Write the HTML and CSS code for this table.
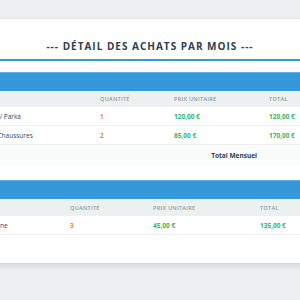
FILE: index.html
```html
<!DOCTYPE html>
<html lang="fr">
<head>
<meta charset="utf-8">
<title>Détail des achats par mois</title>
<link rel="stylesheet" href="styles.css">
</head>
<body>
<div class="card">
  <h2 class="title">--- DÉTAIL DES ACHATS PAR MOIS ---</h2>

  <section class="month">
    <div class="month-bar">Janvier 2024</div>
    <table class="items items-a">
      <colgroup>
        <col class="c-prod-a"><col class="c-qty-a"><col class="c-price-a"><col>
      </colgroup>
      <thead>
        <tr><th>Produit</th><th>Quantité</th><th>Prix unitaire</th><th>Total</th></tr>
      </thead>
      <tbody>
        <tr><td class="prod">Manteau / Parka</td><td class="qty">1</td><td class="money">120,00 €</td><td class="money">120,00 €</td></tr>
        <tr><td class="prod">Paire de Chaussures</td><td class="qty">2</td><td class="money">85,00 €</td><td class="money">170,00 €</td></tr>
        <tr class="total-row"><td colspan="3" class="total-label">Total Mensuel</td><td></td></tr>
      </tbody>
    </table>
  </section>

  <section class="month">
    <div class="month-bar">Février 2024</div>
    <table class="items items-b">
      <colgroup>
        <col class="c-prod-b"><col class="c-qty-b"><col class="c-price-b"><col>
      </colgroup>
      <thead>
        <tr><th>Produit</th><th>Quantité</th><th>Prix unitaire</th><th>Total</th></tr>
      </thead>
      <tbody>
        <tr><td class="prod">Pull en laine</td><td class="qty">3</td><td class="money">45,00 €</td><td class="money">135,00 €</td></tr>
      </tbody>
    </table>
  </section>
</div>
</body>
</html>
```
FILE: styles.css
```css
html, body {
  margin: 0;
  padding: 0;
}
body {
  background: #eef0f1;
  font-family: "Open Sans", "DejaVu Sans", sans-serif;
  overflow: hidden;
  display: flex;
  justify-content: center;
  padding-top: 19px;
  height: 300px;
  box-sizing: border-box;
}
.card {
  flex: none;
  width: 408px;
  height: 244px;
  background: #fff;
  box-shadow: 0 3px 7px rgba(0, 0, 0, 0.12);
  padding: 0 12px;
  box-sizing: border-box;
}
.title {
  margin: 0;
  padding: 20px 0 6px;
  font-size: 10px;
  line-height: 14px;
  font-weight: 700;
  letter-spacing: 1px;
  color: #2c3e50;
  text-align: center;
  border-bottom: 2px solid #3498db;
}
.month {
  margin: 11px -12px 0;
}
.month + .month {
  margin-top: 15px;
}
.month-bar {
  background: #3498db;
  border-top: 1px solid #5dade2;
  height: 18px;
  line-height: 18px;
  padding: 0 12px 0 11px;
  color: #fff;
  font-size: 7px;
  font-weight: 700;
}
.items {
  width: 100%;
  border-collapse: collapse;
  table-layout: fixed;
}
.c-prod-a { width: 142px; }
.c-qty-a { width: 74px; }
.c-price-a { width: 95px; }
.c-prod-b { width: 112px; }
.c-qty-b { width: 83px; }
.c-price-b { width: 107px; }
.items th {
  background: #ecf0f1;
  height: 16px;
  padding: 0 12px;
  text-align: left;
  font-size: 5.5px;
  font-weight: 600;
  letter-spacing: 0.3px;
  text-transform: uppercase;
  color: #8f9a9c;
}
.items-b th {
  height: 17px;
}
.items td {
  height: 18px;
  padding: 0 12px;
  font-size: 6.5px;
  color: #34495e;
  border-bottom: 1px solid #eef1f2;
  white-space: nowrap;
}
.items th:first-child,
.items td.prod {
  padding-left: 25px;
}
.items .qty {
  color: #ee8a2a;
  font-weight: 700;
}
.items .money {
  color: #2db868;
  font-weight: 700;
}
.items .total-row td {
  background: #fafbfb;
  height: 20px;
  border-bottom: none;
}
.items .total-label {
  text-align: right;
  padding-right: 0;
  font-weight: 700;
  color: #2c3e50;
}
```
